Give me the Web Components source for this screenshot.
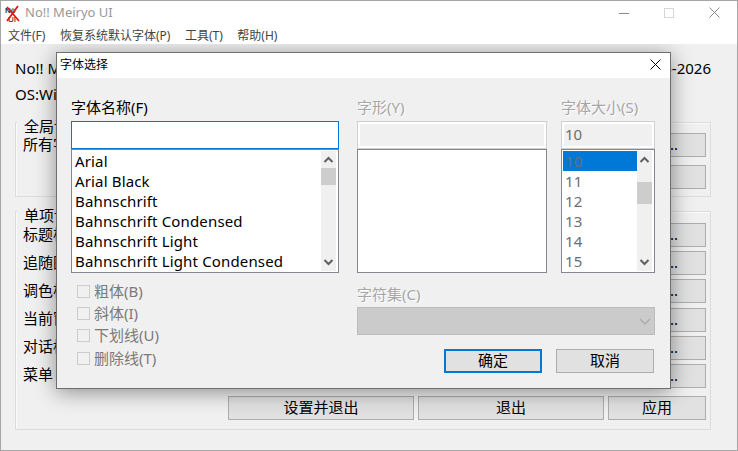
<!DOCTYPE html>
<html lang="zh">
<head>
<meta charset="utf-8">
<title>No!! Meiryo UI</title>
<style>
  html, body { margin: 0; padding: 0; overflow: hidden; background: #f0f0f0; }
  body { font: 15px/21px "Noto Sans", "Noto Sans CJK SC", sans-serif; color: #000; }
</style>
</head>
<body>
<app-window caption="No!! Meiryo UI">
  <menu-item>文件(F)</menu-item>
  <menu-item>恢复系统默认字体(P)</menu-item>
  <menu-item>工具(T)</menu-item>
  <menu-item>帮助(H)</menu-item>

  <info-line slot="content"><span>No!! M</span><span>2005-2026</span></info-line>
  <info-line slot="content"><span>OS:Wi</span></info-line>

  <group-box slot="content" legend="全局设" style="--pad-top:10px;--row-gap:8px;--pad-bottom:7px;margin-top:17px">
    <setting-row label="所有字" action="设置..."></setting-row>
    <setting-row action="应用"></setting-row>
  </group-box>

  <group-box slot="content" legend="单项设" style="--pad-top:11px;--row-gap:4.2px;--pad-bottom:9px;margin-top:14px">
    <setting-row label="标题栏" action="设置..."></setting-row>
    <setting-row label="追随图" action="设置..."></setting-row>
    <setting-row label="调色板" action="设置..."></setting-row>
    <setting-row label="当前窗" action="设置..."></setting-row>
    <setting-row label="对话框" action="设置..."></setting-row>
    <setting-row label="菜单" action="设置..."></setting-row>
    <button-row>
      <win-button style="width:186px">设置并退出</win-button>
      <win-button style="width:186px">退出</win-button>
      <win-button style="width:98px">应用</win-button>
    </button-row>
  </group-box>

  <font-dialog slot="overlay" caption="字体选择">
    <font-field slot="name" label="字体名称(F)" focused>
      <list-box style="--thumb-top:0px;--thumb-height:17px">
        <list-item>Arial</list-item>
        <list-item>Arial Black</list-item>
        <list-item>Bahnschrift</list-item>
        <list-item>Bahnschrift Condensed</list-item>
        <list-item>Bahnschrift Light</list-item>
        <list-item>Bahnschrift Light Condensed</list-item>
      </list-box>
    </font-field>
    <font-field slot="style" label="字形(Y)" disabled>
      <list-box empty></list-box>
    </font-field>
    <font-field slot="size" label="字体大小(S)" disabled value="10">
      <list-box style="--thumb-top:14px;--thumb-height:22px;color:#6d6d6d">
        <list-item selected>10</list-item>
        <list-item>11</list-item>
        <list-item>12</list-item>
        <list-item>13</list-item>
        <list-item>14</list-item>
        <list-item>15</list-item>
      </list-box>
    </font-field>

    <win-check slot="checks">粗体(B)</win-check>
    <win-check slot="checks">斜体(I)</win-check>
    <win-check slot="checks">下划线(U)</win-check>
    <win-check slot="checks">删除线(T)</win-check>

    <win-button slot="actions" default style="width:98px">确定</win-button>
    <win-button slot="actions" style="width:98px">取消</win-button>
  </font-dialog>
</app-window>

<script>
class AppWindow extends HTMLElement {
  constructor() {
    super();
    this.attachShadow({ mode: "open" });
  }

  connectedCallback() {
    this.shadowRoot.innerHTML = `
      <style>
        :host {
          display: flex;
          flex-direction: column;
          box-sizing: border-box;
          width: 738px;
          height: 451px;
          border: 1px solid #a6a6a6;
          background: #f0f0f0;
        }
        #title {
          flex: none;
          display: flex;
          align-items: center;
          height: 23px;
          background: #fff;
          color: #999;
          font-size: 13px;
        }
        #title svg.logo { flex: none; margin: 3px 3px 0 3px; }
        #title span { flex: 1; padding-left: 1px; }
        #controls { display: flex; align-items: center; padding-right: 17px; gap: 35px; }
        #menu {
          flex: none;
          display: flex;
          box-sizing: border-box;
          height: 20px;
          padding: 2px 0 0 7px;
          gap: 14.5px;
          background: #fff;
        }
        #main {
          flex: 1;
          position: relative;
          overflow: hidden;
          padding: 14px 26px 0 14px;
        }
      </style>
      <div id="title">
        <svg class="logo" width="17" height="18" viewBox="0 0 17 18">
          <text x="1" y="7.5" font-family="Liberation Sans" font-size="8" font-weight="700" fill="#333">No</text>
          <text x="4" y="16.5" font-family="Liberation Sans" font-size="8" fill="#000">UI</text>
          <path d="M3 2 L15 16 M14 1 L3 16" stroke="#ee1111" stroke-width="1.8" fill="none"/>
          <path d="M8 5 L9 3 L10 6" stroke="#a8a040" stroke-width="1" fill="none"/>
        </svg>
        <span>${this.getAttribute("caption")}</span>
        <div id="controls">
          <svg width="10" height="10" viewBox="0 0 10 10"><path d="M0 5.5 H10" stroke="#8a8a8a"/></svg>
          <svg width="10" height="10" viewBox="0 0 10 10"><rect x=".5" y=".5" width="9" height="9" fill="none" stroke="#d6d6d6"/></svg>
          <svg width="11" height="11" viewBox="0 0 11 11"><path d="M.5 .5 L10.5 10.5 M10.5 .5 L.5 10.5" stroke="#8a8a8a" fill="none"/></svg>
        </div>
      </div>
      <div id="menu"><slot></slot></div>
      <div id="main">
        <slot name="content"></slot>
        <slot name="overlay"></slot>
      </div>
    `;
  }
}

class MenuItem extends HTMLElement {
  constructor() {
    super();
    this.attachShadow({ mode: "open" }).innerHTML = `
      <style>
        :host { display: block; font-size: 12px; line-height: 20px; color: #444; white-space: nowrap; }
      </style>
      <slot></slot>
    `;
  }
}

class InfoLine extends HTMLElement {
  constructor() {
    super();
    this.attachShadow({ mode: "open" }).innerHTML = `
      <style>
        :host { display: flex; justify-content: space-between; height: 21px; margin-bottom: 5px; white-space: nowrap; }
        ::slotted(span:first-child) { width: 41px; overflow: hidden; }
      </style>
      <slot></slot>
    `;
  }
}

class GroupBox extends HTMLElement {
  constructor() {
    super();
    this.attachShadow({ mode: "open" });
  }

  connectedCallback() {
    this.shadowRoot.innerHTML = `
      <style>
        :host {
          display: flex;
          flex-direction: column;
          gap: var(--row-gap);
          position: relative;
          box-sizing: border-box;
          border: 1px solid #dcdcdc;
          box-shadow: inset 1px 1px 0 #fafafa;
          padding: var(--pad-top) 4px var(--pad-bottom) 7px;
        }
        #legend {
          position: absolute;
          left: 1px;
          top: -7px;
          padding: 0 7px;
          background: #f0f0f0;
        }
      </style>
      <div id="legend">${this.getAttribute("legend")}</div>
      <slot></slot>
    `;
  }
}

class SettingRow extends HTMLElement {
  constructor() {
    super();
    this.attachShadow({ mode: "open" });
  }

  connectedCallback() {
    this.shadowRoot.innerHTML = `
      <style>
        :host { display: flex; justify-content: space-between; align-items: center; height: 24px; }
        span { margin-bottom: 2px; }
      </style>
      <span>${this.getAttribute("label") || ""}</span>
      <win-button style="width:98px">${this.getAttribute("action")}</win-button>
    `;
  }
}

class ButtonRow extends HTMLElement {
  constructor() {
    super();
    this.attachShadow({ mode: "open" }).innerHTML = `
      <style>
        :host { display: flex; justify-content: flex-end; gap: 4px; margin-top: 4px; }
      </style>
      <slot></slot>
    `;
  }
}

class WinButton extends HTMLElement {
  constructor() {
    super();
    this.attachShadow({ mode: "open" }).innerHTML = `
      <style>
        :host {
          display: flex;
          align-items: center;
          justify-content: center;
          box-sizing: border-box;
          height: 24px;
          padding-bottom: 1px;
          border: 1px solid #adadad;
          background: #e1e1e1;
          white-space: nowrap;
        }
        :host([default]) { border: 2px solid #0078d7; }
      </style>
      <slot></slot>
    `;
  }
}

class FontDialog extends HTMLElement {
  constructor() {
    super();
    this.attachShadow({ mode: "open" });
  }

  connectedCallback() {
    this.shadowRoot.innerHTML = `
      <style>
        :host {
          position: absolute;
          left: 55px;
          top: 8px;
          display: flex;
          flex-direction: column;
          box-sizing: border-box;
          width: 615px;
          height: 337px;
          border: 1px solid #6e6e6e;
          background: #f0f0f0;
          box-shadow: 0 3px 20px rgba(0, 0, 0, .42);
        }
        #title {
          flex: none;
          display: flex;
          justify-content: space-between;
          align-items: center;
          box-sizing: border-box;
          height: 25px;
          padding: 0 9px 2px 3px;
          background: #fff;
          font-size: 12px;
        }
        #fields {
          display: grid;
          grid-template-columns: 286px 204px 94px;
          padding: 19px 0 0 14px;
        }
        ::slotted([slot="name"]) { width: 268px; }
        ::slotted([slot="style"]) { width: 190px; }
        #lower {
          display: grid;
          grid-template-columns: 286px 298px;
          padding-left: 14px;
        }
        #checks {
          display: flex;
          flex-direction: column;
          padding: 7px 0 0 6px;
        }
        #charset { padding-top: 11px; }
        #charset label {
          display: block;
          height: 23px;
          color: #a6a6a6;
          text-shadow: 1px 1px 0 #fff;
        }
        #select {
          display: flex;
          justify-content: flex-end;
          align-items: center;
          box-sizing: border-box;
          height: 28px;
          padding-right: 3px;
          border: 1px solid #bcbcbc;
          background: #cbcbcb;
        }
        #actions {
          display: flex;
          justify-content: flex-end;
          gap: 14px;
          margin: 14px 1px 0 0;
        }
      </style>
      <div id="title">
        <span>${this.getAttribute("caption")}</span>
        <svg width="11" height="11" viewBox="0 0 11 11"><path d="M.5 .5 L10.5 10.5 M10.5 .5 L.5 10.5" stroke="#000" fill="none"/></svg>
      </div>
      <div id="fields">
        <slot name="name"></slot>
        <slot name="style"></slot>
        <slot name="size"></slot>
      </div>
      <div id="lower">
        <div id="checks"><slot name="checks"></slot></div>
        <div id="charset">
          <label>字符集(C)</label>
          <div id="select">
            <svg width="12" height="7" viewBox="0 0 12 7"><path d="M1 1 L6 6 L11 1" stroke="#a8a8a8" stroke-width="1.2" fill="none"/></svg>
          </div>
          <div id="actions"><slot name="actions"></slot></div>
        </div>
      </div>
    `;
  }
}

class FontField extends HTMLElement {
  constructor() {
    super();
    this.attachShadow({ mode: "open" });
  }

  connectedCallback() {
    this.shadowRoot.innerHTML = `
      <style>
        :host { display: block; }
        label { display: block; height: 24px; }
        :host([disabled]) label { color: #a6a6a6; text-shadow: 1px 1px 0 #fff; }
        #input {
          box-sizing: border-box;
          height: 28px;
          padding-left: 3px;
          line-height: 26px;
          background: #fff;
          border: 1px solid #0078d7;
        }
        :host([disabled]) #input {
          line-height: 25px;
          color: #6d6d6d;
          background: #f0f0f0;
          border: 1px solid #cfcfcf;
          box-shadow: inset 0 0 0 2px #fff;
        }
      </style>
      <label>${this.getAttribute("label")}</label>
      <div id="input">${this.getAttribute("value") || ""}</div>
      <slot></slot>
    `;
  }
}

class ListBox extends HTMLElement {
  constructor() {
    super();
    this.attachShadow({ mode: "open" });
  }

  connectedCallback() {
    const chevronUp = `<svg width="15" height="17" viewBox="0 0 15 17"><path d="M3.5 11 L7.5 7 L11.5 11" stroke="#606060" stroke-width="2" fill="none"/></svg>`;
    const chevronDown = `<svg width="15" height="17" viewBox="0 0 15 17"><path d="M3.5 6 L7.5 10 L11.5 6" stroke="#606060" stroke-width="2" fill="none"/></svg>`;
    const bar = this.hasAttribute("empty") ? "" : `
      <div id="bar">
        ${chevronUp}
        <div id="track"><div id="thumb"></div></div>
        ${chevronDown}
      </div>`;
    this.shadowRoot.innerHTML = `
      <style>
        :host {
          display: flex;
          box-sizing: border-box;
          height: 124px;
          padding: 1px 2px 1px 1px;
          border: 1px solid #828790;
          background: #fff;
        }
        #items { flex: 1; min-width: 0; overflow: hidden; }
        #bar {
          flex: none;
          display: flex;
          flex-direction: column;
          width: 15px;
          height: 120px;
          background: #f0f0f0;
        }
        #bar svg { flex: none; display: block; }
        #track { flex: 1; }
        #thumb {
          margin-top: var(--thumb-top);
          height: var(--thumb-height);
          background: #cdcdcd;
        }
      </style>
      <div id="items"><slot></slot></div>
      ${bar}
    `;
  }
}

class ListItem extends HTMLElement {
  constructor() {
    super();
    this.attachShadow({ mode: "open" }).innerHTML = `
      <style>
        :host { display: block; height: 20px; line-height: 20px; padding-left: 2px; letter-spacing: .15px; white-space: nowrap; }
        :host([selected]) { background: #0078d7; }
      </style>
      <slot></slot>
    `;
  }
}

class WinCheck extends HTMLElement {
  constructor() {
    super();
    this.attachShadow({ mode: "open" }).innerHTML = `
      <style>
        :host { display: flex; align-items: center; gap: 4px; height: 22.4px; color: #7a7a7a; white-space: nowrap; }
        i { flex: none; box-sizing: border-box; width: 13px; height: 13px; border: 1px solid #cccccc; }
      </style>
      <i></i><slot></slot>
    `;
  }
}

customElements.define("app-window", AppWindow);
customElements.define("menu-item", MenuItem);
customElements.define("info-line", InfoLine);
customElements.define("group-box", GroupBox);
customElements.define("setting-row", SettingRow);
customElements.define("button-row", ButtonRow);
customElements.define("win-button", WinButton);
customElements.define("font-dialog", FontDialog);
customElements.define("font-field", FontField);
customElements.define("list-box", ListBox);
customElements.define("list-item", ListItem);
customElements.define("win-check", WinCheck);
</script>
</body>
</html>
